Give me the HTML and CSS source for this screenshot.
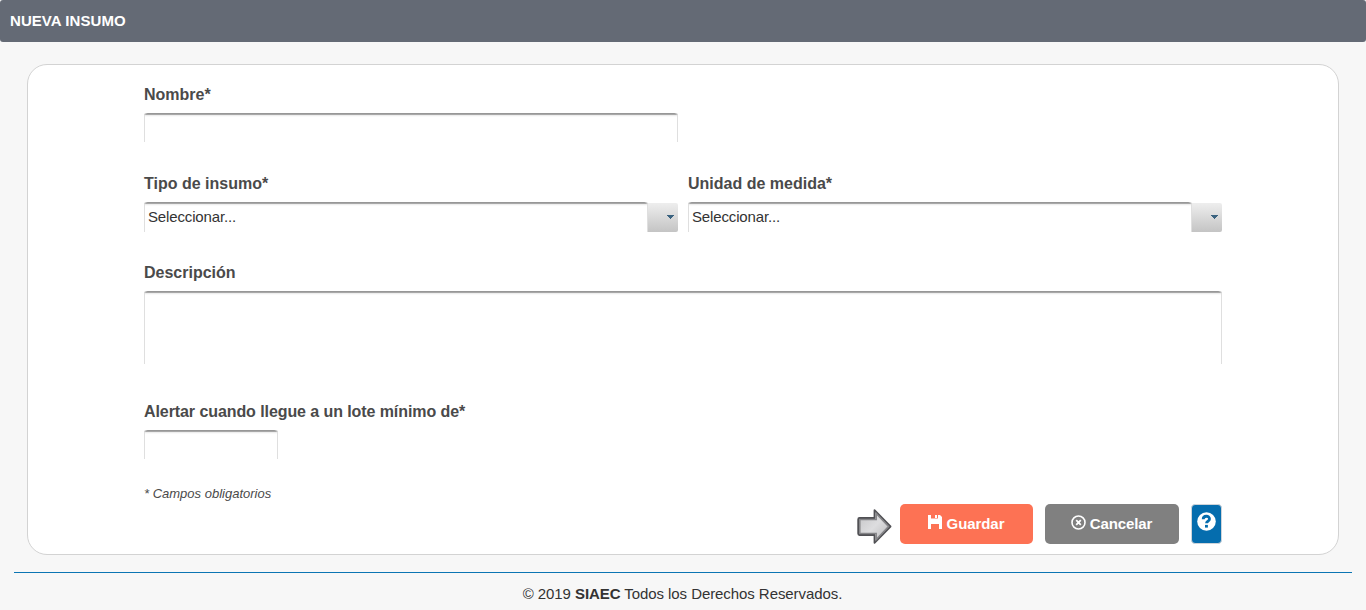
FILE: index.html
```html
<!DOCTYPE html>
<html lang="es">
<head>
<meta charset="utf-8">
<title>Nueva insumo</title>
<link rel="stylesheet" href="styles.css">
</head>
<body>
<header class="titlebar">NUEVA INSUMO</header>
<main class="panel">
  <form class="form">
    <div class="field half">
      <label class="label" for="nombre">Nombre*</label>
      <input class="input" id="nombre" type="text">
    </div>
    <div class="row">
      <div class="field">
        <span class="label">Tipo de insumo*</span>
        <div class="select"><div class="input value">Seleccionar...</div><div class="toggle"><svg width="7" height="4" viewBox="0 0 7 4" shape-rendering="crispEdges"><path d="M0 0h7v1H6v1H5v1H4v1H3V3H2V2H1V1H0z" fill="#3b6380"/></svg></div></div>
      </div>
      <div class="field">
        <span class="label">Unidad de medida*</span>
        <div class="select"><div class="input value">Seleccionar...</div><div class="toggle"><svg width="7" height="4" viewBox="0 0 7 4" shape-rendering="crispEdges"><path d="M0 0h7v1H6v1H5v1H4v1H3V3H2V2H1V1H0z" fill="#3b6380"/></svg></div></div>
      </div>
    </div>
    <div class="field tall">
      <label class="label" for="descripcion">Descripción</label>
      <textarea class="input area" id="descripcion"></textarea>
    </div>
    <div class="field alert">
      <label class="label tight" for="lote">Alertar cuando llegue a un lote mínimo de*</label>
      <input class="input short" id="lote" type="text">
    </div>
    <p class="note">* Campos obligatorios</p>
    <div class="actions">
      <svg class="arrow" width="35" height="36" viewBox="0 0 35 36">
        <defs><linearGradient id="metal" x1="0" y1="0" x2="1" y2="1"><stop offset="0" stop-color="#c2c2c4"/><stop offset=".5" stop-color="#dddddf"/><stop offset="1" stop-color="#b4b4b6"/></linearGradient></defs>
        <path d="M2.500 10H17.500V2.200L33.500 18.500 17.500 34.800V27H2.500Q1.200 27 1.200 25.500V11.500Q1.200 10 2.500 10Z" fill="url(#metal)" stroke="#505054" stroke-width="1.800" stroke-linejoin="round"/>
        <path d="M2.800 25.500V11.500H19.200V5.500L31.500 18.500 19.200 31.500V25.500Z" fill="none" stroke="#858588" stroke-width="1.500"/>
      </svg>
      <button class="btn save" type="button"><svg class="icon" width="16" height="16" viewBox="0 0 16 16"><path fill="#fff" d="M1 2h3v4h8V2h1l2 2v12h-3v-5H4v5H1zM8 2h2v3H8z"/><path fill="#fff" d="M4 5.500h8V11H4zM11 2h1v4h-1z"/></svg>Guardar</button>
      <button class="btn cancel" type="button"><svg class="icon" width="16" height="16" viewBox="0 0 16 16"><circle cx="8.500" cy="8.500" r="6.500" fill="none" stroke="#fff" stroke-width="1.600"/><path d="M6.200 6.200l4.600 4.600m0-4.600l-4.600 4.600" stroke="#fff" stroke-width="1.800"/></svg>Cancelar</button>
      <button class="help" type="button" aria-label="Ayuda"><svg width="19" height="19" viewBox="0 0 19 19"><circle cx="9.500" cy="9.500" r="9.300" fill="#fff"/><path d="M6.200 7.300C6.200 3.300 12.500 3.300 12.500 7c0 2-3 2.200-3 4.300" fill="none" stroke="#056dae" stroke-width="2.800"/><path d="M8 12.900h2.900v2.700H8z" fill="#056dae"/></svg></button>
    </div>
  </form>
</main>
<footer class="footer">© 2019 <b>SIAEC</b> Todos los Derechos Reservados.</footer>
</body>
</html>
```
FILE: styles.css
```css
* { box-sizing: border-box; }
body {
  margin: 0;
  height: 610px;
  overflow: hidden;
  background: #f7f7f7;
  color: #333;
  font: 15px/20px "Liberation Sans", Arial, sans-serif;
}
.titlebar {
  height: 42px;
  padding: 11px 10px;
  border-radius: 3px;
  background: #646a75;
  color: #fff;
  font-weight: bold;
  letter-spacing: .06px;
}
.panel {
  height: 491px;
  margin: 22px 27px 17px;
  padding: 19px 116px 0;
  border: 1px solid #d3d3d3;
  border-radius: 20px;
  background: #fff;
}
.form { display: flex; flex-direction: column; }
.field { display: flex; flex-direction: column; height: 89px; }
.half { width: 534px; }
.tall { height: 139px; }
.alert { height: 74px; }
.row { display: grid; grid-template-columns: 534px 534px; gap: 10px; }
.label {
  height: 29px;
  color: #4a4a4a;
  font-size: 16px;
  font-weight: bold;
  line-height: 22px;
}
.tight { letter-spacing: -.08px; }
.input {
  display: block;
  width: 100%;
  height: 29px;
  margin: 0;
  padding: 3px;
  border: 0;
  border-radius: 3px 3px 0 0;
  outline: 0;
  background: linear-gradient(#979797 0 1px, #a8a8a8 1px 2px, #eee 2px 3px, #fafafa 3px 4px, #fff 4px);
  box-shadow: inset 1px 0 #dfdfdf, inset -1px 0 #dfdfdf;
  color: #333;
  font: inherit;
}
.area { height: 73px; resize: none; }
.short { width: 134px; }
.select { display: flex; height: 30px; }
.value {
  width: 504px;
  height: 30px;
  padding: 5px 4px;
  letter-spacing: -.14px;
}
.toggle {
  width: 30px;
  height: 29px;
  margin-top: 1px;
  padding: 12px 0 0 19px;
  border-radius: 0 2px 2px 0;
  background: linear-gradient(#eee, #c4c4c4);
}
svg { display: block; flex: none; }
.note {
  height: 29px;
  margin: 0;
  padding-top: 9px;
  color: #4a4a4a;
  font-size: 13px;
  font-style: italic;
  line-height: 20px;
}
.actions {
  display: flex;
  justify-content: flex-end;
  height: 40px;
}
.arrow { margin: 4px 8px 0 0; }
.btn {
  display: flex;
  align-items: flex-start;
  justify-content: center;
  height: 40px;
  padding: 10px 2px 0 0;
  border: 0;
  border-radius: 5px;
  color: #fff;
  font: bold 15px/20px "Liberation Sans", Arial, sans-serif;
  letter-spacing: -.08px;
}
.save { width: 133px; margin-right: 12px; background: #fd7254; }
.cancel { width: 134px; margin-right: 12px; background: #808080; }
.icon { margin-right: 4px; }
.save .icon { margin-top: -1px; }
.help {
  display: flex;
  align-items: flex-start;
  width: 31px;
  height: 40px;
  padding: 7px 0 0 5px;
  border: 1px solid #cfd4d9;
  border-radius: 4px;
  background: #056dae;
}
.footer {
  margin: 0 14px;
  padding: 11px 1px 0 0;
  border-top: 1px solid #0b75b3;
  letter-spacing: -.07px;
  text-align: center;
}
```
